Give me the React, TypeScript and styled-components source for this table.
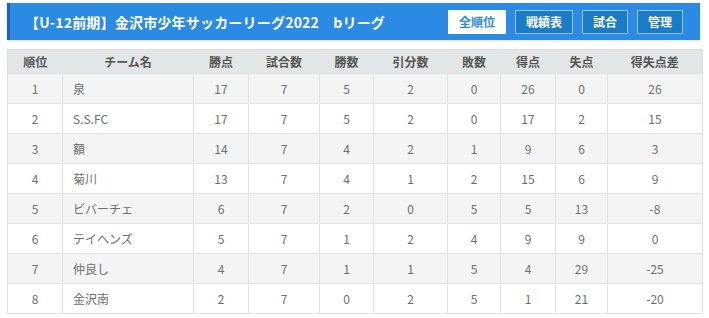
import { FC } from 'react';
import styled, { createGlobalStyle } from 'styled-components';

const GlobalStyle = createGlobalStyle`
  body {
    margin: 0;
    background: #ffffff;
    font-family: "Noto Sans CJK JP", "Noto Sans", sans-serif;
  }
`;

const Page = styled.div`
  width: 695px;
  padding: 3px 7px 0 7px;
`;

const TitleBar = styled.div`
  height: 37px;
  margin-right: 2px;
  display: flex;
  align-items: center;
  justify-content: space-between;
  background: #2b8ae3;
  border-left: 3px solid #1b62b3;
  padding: 0 17px 0 15px;
  box-shadow: 0 1px 2px rgba(0, 0, 0, 0.12);
`;

const Title = styled.h1`
  margin: 0;
  font-size: 14px;
  font-weight: 700;
  color: #ffffff;
  letter-spacing: 0.2px;
  white-space: pre;
`;

const Nav = styled.div`
  display: flex;
  gap: 9px;
`;

const NavButton = styled.button<{ $active?: boolean }>`
  height: 24px;
  padding: 0 10px;
  font-family: inherit;
  font-size: 12px;
  font-weight: 700;
  line-height: 1;
  border: 1px solid ${(p) => (p.$active ? '#ffffff' : 'rgba(255, 255, 255, 0.55)')};
  background: ${(p) => (p.$active ? '#ffffff' : '#1a7bc6')};
  color: ${(p) => (p.$active ? '#2b8ae3' : '#ffffff')};
  cursor: pointer;
`;

const Table = styled.table`
  margin-top: 9px;
  width: 695px;
  border-collapse: collapse;
  table-layout: fixed;
  border: 1px solid #dcdcdc;
  font-size: 12px;
  color: #6e6e6e;
`;

const HeadCell = styled.th`
  height: 23px;
  padding: 0;
  background: #e3e6e6;
  color: #555555;
  font-weight: 700;
  text-align: center;
`;

const Row = styled.tr<{ $odd: boolean }>`
  background: ${(p) => (p.$odd ? '#f4f4f4' : '#ffffff')};
`;

const Cell = styled.td<{ $left?: boolean }>`
  height: 29px;
  padding: ${(p) => (p.$left ? '0 0 0 10px' : '0')};
  border: 1px solid #e2e2e2;
  text-align: ${(p) => (p.$left ? 'left' : 'center')};
`;

const columns = [
  { label: '順位', width: 55 },
  { label: 'チーム名', width: 131 },
  { label: '勝点', width: 55 },
  { label: '試合数', width: 71 },
  { label: '勝数', width: 54 },
  { label: '引分数', width: 74 },
  { label: '敗数', width: 53 },
  { label: '得点', width: 55 },
  { label: '失点', width: 52 },
  { label: '得失点差', width: 95 },
];

type Standing = [number, string, number, number, number, number, number, number, number, number];

const standings: Standing[] = [
  [1, '泉', 17, 7, 5, 2, 0, 26, 0, 26],
  [2, 'S.S.FC', 17, 7, 5, 2, 0, 17, 2, 15],
  [3, '額', 14, 7, 4, 2, 1, 9, 6, 3],
  [4, '菊川', 13, 7, 4, 1, 2, 15, 6, 9],
  [5, 'ビバーチェ', 6, 7, 2, 0, 5, 5, 13, -8],
  [6, 'テイヘンズ', 5, 7, 1, 2, 4, 9, 9, 0],
  [7, '仲良し', 4, 7, 1, 1, 5, 4, 29, -25],
  [8, '金沢南', 2, 7, 0, 2, 5, 1, 21, -20],
];

const navItems = ['全順位', '戦績表', '試合', '管理'];

const App: FC = () => {
  return (
    <Page>
      <GlobalStyle />
      <TitleBar>
        <Title>{'【U-12前期】金沢市少年サッカーリーグ2022　bリーグ'}</Title>
        <Nav>
          {navItems.map((item, i) => (
            <NavButton key={item} $active={i === 0}>
              {item}
            </NavButton>
          ))}
        </Nav>
      </TitleBar>
      <Table>
        <colgroup>
          {columns.map((c) => (
            <col key={c.label} style={{ width: c.width }} />
          ))}
        </colgroup>
        <thead>
          <tr>
            {columns.map((c) => (
              <HeadCell key={c.label}>{c.label}</HeadCell>
            ))}
          </tr>
        </thead>
        <tbody>
          {standings.map((row, i) => (
            <Row key={row[0]} $odd={i % 2 === 0}>
              {row.map((value, j) => (
                <Cell key={j} $left={j === 1}>
                  {value}
                </Cell>
              ))}
            </Row>
          ))}
        </tbody>
      </Table>
    </Page>
  );
};

export default App;
